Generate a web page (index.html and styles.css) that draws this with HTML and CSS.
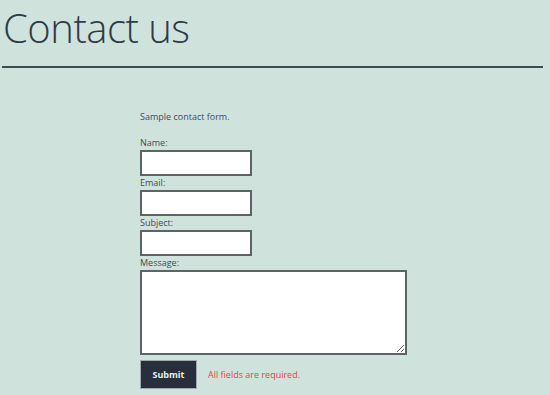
FILE: index.html
```html
<!DOCTYPE html>
<html lang="en">
<head>
    <meta charset="UTF-8">
    <title>Contact us</title>
    <link rel="stylesheet" href="styles.css">
</head>
<body>
    <header class="page-header">
        <h1>Contact us</h1>
    </header>

    <div class="container">
        <p class="intro">Sample contact form.</p>
        <form class="contact-form">
            <label for="name">Name:</label>
            <input type="text" id="name" class="field">
            <label for="email">Email:</label>
            <input type="text" id="email" class="field">
            <label for="subject">Subject:</label>
            <input type="text" id="subject" class="field">
            <label for="message">Message:</label>
            <textarea id="message" class="message"></textarea>
            <div class="actions">
                <button type="button" class="submit-btn">Submit</button>
                <span class="error">All fields are required.</span>
            </div>
        </form>
    </div>
</body>
</html>
```

FILE: styles.css
```css
body {
    background-color: #cfe3dc;
    font-family: "Open Sans", Arial, sans-serif;
    color: #414c57;
    margin: 0;
    padding: 0 7px 0 2px;
}

.page-header {
    border-bottom: 2px solid #3e4a51;
    padding-bottom: 11px;
}

h1 {
    margin: 0;
    padding-left: 1px;
    font-size: 40px;
    font-weight: 300;
    letter-spacing: -0.5px;
    line-height: 55px;
    color: #2f3b47;
}

.container {
    padding-left: 138px;
    padding-top: 43px;
}

.intro {
    margin: 0 0 14px 0;
    font-size: 9px;
    line-height: 12px;
}

.contact-form {
    display: flex;
    flex-direction: column;
    align-items: flex-start;
}

label {
    font-size: 9px;
    line-height: 12px;
    margin-bottom: 1px;
}

.field {
    width: 112px;
    height: 26px;
    box-sizing: border-box;
    border: 2px solid #5c6468;
    background: #fff;
    margin: 0 0 1px 0;
    padding: 2px 4px;
}

.message {
    width: 267px;
    height: 85px;
    box-sizing: border-box;
    border: 2px solid #5c6468;
    background: #fff;
    margin: 0 0 0 0;
}

.actions {
    display: flex;
    align-items: center;
    gap: 11px;
    margin-top: 5px;
}

.submit-btn {
    background-color: #262f3b;
    border: 1px solid #a0aaa8;
    color: #e6eeec;
    font-family: "Open Sans", Arial, sans-serif;
    font-weight: bold;
    font-size: 9px;
    width: 57px;
    height: 29px;
    cursor: pointer;
}

.error {
    color: #ee3b52;
    font-size: 9px;
}
```
